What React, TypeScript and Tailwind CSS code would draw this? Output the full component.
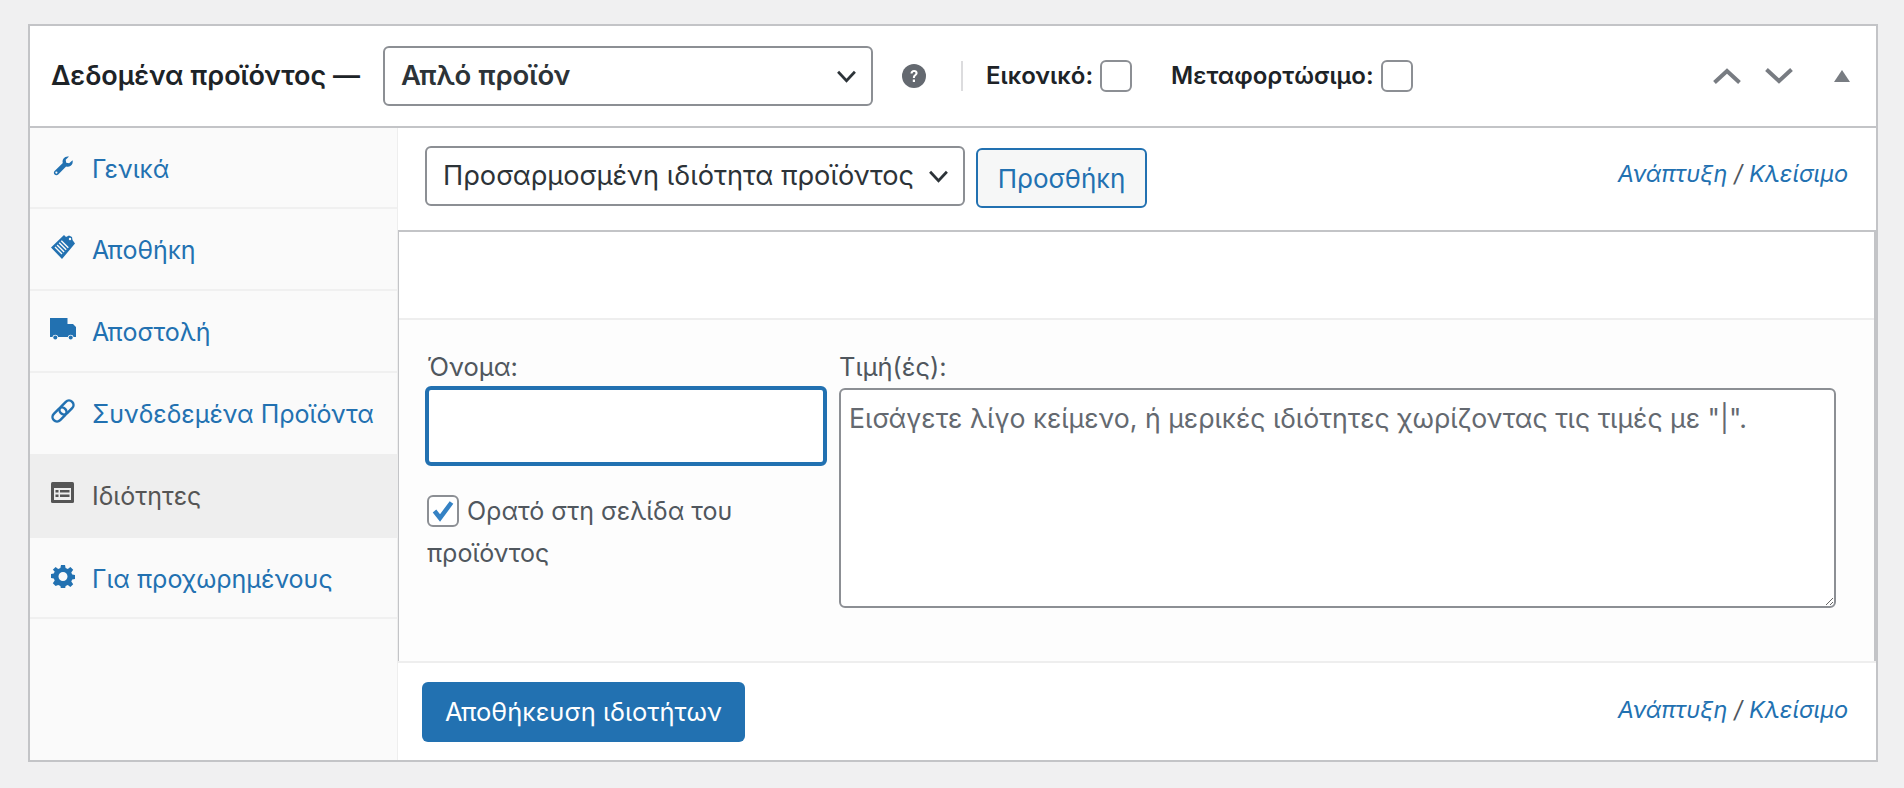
import React from 'react';

const Wrench = () => (
  <svg viewBox="0 0 22 22" className="w-[22px] h-[22px]" fill="currentColor">
    <path d="M20.600 5.200c.5 2.200-.2 4.300-1.900 5.500-1.400 1-3.100 1.200-4.600.7L6.200 19.600c-1 1-2.600 1-3.600 0s-1-2.500 0-3.500l8.200-8c-.5-1.600-.2-3.300.8-4.600C12.800 1.800 15 1.100 17 1.600l-3.300 3.200.5 2.900 2.900.6 3.500-3.100zM4.400 16.500a1.100 1.100 0 1 0 0 2.200 1.100 1.100 0 0 0 0-2.200z" />
  </svg>
);

const Clipboard = () => (
  <svg viewBox="0 0 26 26" className="w-[26px] h-[26px]">
    <path fill="currentColor" d="M1 13.500 14 1l2 2 3-1.500 3 1.500.5 3 2.500 3.500L12 25z" />
    <g stroke="#fafafa" strokeWidth="1.400">
      <path d="m5 13 7 7M7.100 10.900l7 7M9.200 8.800l7 7M11.300 6.700l7 7" />
    </g>
    <circle cx="20" cy="5" r="1.200" fill="#fafafa" />
  </svg>
);

const Truck = () => (
  <svg viewBox="0 0 26 22" className="w-[26px] h-[22px]" fill="currentColor">
    <path d="M0 0h17.500v6H23l3 3v10h-2.400a3 3 0 0 0-5.800 0H8.200a3 3 0 0 0-5.800 0H0z" />
    <circle cx="5.300" cy="19.500" r="2" />
    <circle cx="20.700" cy="19.500" r="2" />
  </svg>
);

const LinkIcon = () => (
  <svg viewBox="0 0 24 24" className="w-[24px] h-[24px]" fill="none" stroke="currentColor" strokeWidth="2.500">
    <rect x="-8" y="-4.500" width="16" height="9" rx="4.500" transform="translate(15.500 8.500) rotate(-45)" />
    <rect x="-8" y="-4.500" width="16" height="9" rx="4.500" transform="translate(8.500 15.500) rotate(-45)" />
  </svg>
);

const TableIcon = () => (
  <svg viewBox="0 0 24 22" className="w-[24px] h-[22px]">
    <rect x="0" y="0" width="23" height="21" rx="1.500" fill="currentColor" />
    <rect x="3" y="6" width="17" height="12" fill="#eeeeee" />
    <path d="M4.500 8h3v2.500h-3zM4.500 12.500h3V15h-3zM9 8h9.500v2.500H9zM9 12.500h9.500V15H9z" fill="currentColor" />
  </svg>
);

const Gear = () => (
  <svg viewBox="0 0 24 24" className="w-[24px] h-[24px]" fill="currentColor">
    <path fillRule="evenodd" d="M10 1h4l.6 3 2.200.9L19.400 3l2.800 2.800-1.900 2.600.9 2.100 2.800.5v4l-2.800.5-.9 2.100 1.900 2.600-2.800 2.800-2.600-1.900-2.200.9-.6 3h-4l-.6-3-2.200-.9L4.600 22l-2.800-2.800 1.900-2.600-.9-2.100L0 14v-4l2.800-.5.9-2.100L1.800 5.800 4.600 3l2.600 1.900 2.200-.9zM12 8a4.500 4.500 0 1 0 0 9 4.500 4.500 0 0 0 0-9z" />
  </svg>
);

const Chevron = () => (
  <svg viewBox="0 0 20 12" className="w-[21px] h-[13px]" fill="none" stroke="#2c3338" strokeWidth="2.600">
    <path d="M2 1.500 10 10l8-8.500" />
  </svg>
);

const tabs = [
  { label: 'Γενικά', icon: <Wrench />, cls: 'h-[81px] border-[#f0f0f0] text-[#2271b1]' },
  { label: 'Αποθήκη', icon: <Clipboard />, cls: 'h-[82px] border-[#f0f0f0] text-[#2271b1]' },
  { label: 'Αποστολή', icon: <Truck />, cls: 'h-[82px] border-[#f0f0f0] text-[#2271b1]' },
  { label: 'Συνδεδεμένα Προϊόντα', icon: <LinkIcon />, cls: 'h-[81px] border-transparent text-[#2271b1]' },
  { label: 'Ιδιότητες', icon: <TableIcon />, cls: 'h-[84px] bg-[#eeeeee] border-[#eeeeee] text-[#555555]' },
  { label: 'Για προχωρημένους', icon: <Gear />, cls: 'h-[81px] border-[#f0f0f0] text-[#2271b1]' },
];

const ExpandClose = () => (
  <p className="italic text-[#50575e] text-[23.5px] leading-[34px] whitespace-nowrap">
    <a className="text-[#2271b1]">Ανάπτυξη</a> / <a className="text-[#2271b1]">Κλείσιμο</a>
  </p>
);

const Checkbox = ({ checked }: { checked?: boolean }) => (
  <span className="flex items-center justify-center shrink-0 w-[32px] h-[32px] bg-white border-2 border-[#8c8f94] rounded-[6px]">
    {checked && (
      <svg viewBox="0 0 24 24" className="w-[24px] h-[24px]" fill="none" stroke="#3582c4" strokeWidth="4.500">
        <path d="m3.500 12 5.500 7L20.500 3.500" />
      </svg>
    )}
  </span>
);

export default function App() {
  return (
    <div className="min-h-screen bg-[#f0f0f1] pl-[28px] pt-[24px] font-['Inter',sans-serif] text-[#2c3338]">
      <div className="w-[1850px] h-[738px] border-2 border-[#c3c4c7] bg-white flex flex-col">
        {/* header */}
        <div className="h-[102px] shrink-0 border-b-2 border-[#c3c4c7] flex items-center pl-[21px] pr-[26px]">
          <h2 className="text-[27px] font-semibold text-[#1d2327] whitespace-nowrap">Δεδομένα προϊόντος —</h2>
          <div className="relative ml-[23px] w-[490px]">
            <select className="appearance-none w-full h-[60px] pl-[16px] bg-white border-2 border-[#8c8f94] rounded-[6px] text-[27.5px] font-semibold text-[#2c3338]">
              <option>Απλό προϊόν</option>
            </select>
            <span className="absolute right-[16px] top-[24px]"><Chevron /></span>
          </div>
          <svg viewBox="0 0 24 24" className="w-[24px] h-[24px] ml-[29px] shrink-0">
            <circle cx="12" cy="12" r="12" fill="#646970" />
            <path d="M8.500 9.500c0-2.200 1.500-3.500 3.600-3.500s3.500 1.200 3.500 3c0 2.600-2.700 2.600-2.700 5h-2c0-3.200 2.600-3.300 2.600-4.900 0-.7-.6-1.200-1.400-1.200-.9 0-1.500.6-1.500 1.600zM10.800 15.500h2.200v2.400h-2.200z" fill="#fff" />
          </svg>
          <span className="w-[2px] h-[30px] bg-[#dcdcde] ml-[35px]" />
          <label className="flex items-center ml-[23px] text-[24px] font-semibold text-[#1d2327]">
            Εικονικό:<span className="ml-[7px]"><Checkbox /></span>
          </label>
          <label className="flex items-center ml-[39px] text-[24px] font-semibold text-[#1d2327]">
            Μεταφορτώσιμο:<span className="ml-[7px]"><Checkbox /></span>
          </label>
          <div className="ml-auto flex items-center">
            <svg viewBox="0 0 28 16" className="w-[28px] h-[16px]" fill="none" stroke="#787c82" strokeWidth="4">
              <path d="M1.500 14.500 14 3l12.500 11.500" />
            </svg>
            <svg viewBox="0 0 28 16" className="w-[28px] h-[16px] ml-[24px]" fill="none" stroke="#787c82" strokeWidth="4">
              <path d="M1.500 1.500 14 13 26.500 1.500" />
            </svg>
            <svg viewBox="0 0 16 12" className="w-[16px] h-[12px] ml-[41px]" fill="#787c82">
              <path d="M8 0l8 12H0z" />
            </svg>
          </div>
        </div>

        <div className="flex flex-1 min-h-0">
          {/* tabs */}
          <ul className="w-[368px] shrink-0 bg-[#fafafa] border-r border-[#eeeeee]">
            {tabs.map((t) => (
              <li key={t.label} className={`${t.cls} flex items-center pl-[20px] pt-[4px] border-b-2`}>
                <span className="w-[26px] flex justify-center -mt-[8px]">{t.icon}</span>
                <span className="ml-[16px] text-[25px] whitespace-nowrap">{t.label}</span>
              </li>
            ))}
          </ul>

          {/* panel */}
          <div className="flex-1 min-w-0 flex flex-col">
            <div className="h-[104px] shrink-0 flex items-start pt-[18px] pl-[27px] pr-[28px] border-b-2 border-[#f0f0f0]">
              <div className="relative w-[540px]">
                <select className="appearance-none w-full h-[60px] pl-[16px] bg-white border-2 border-[#8c8f94] rounded-[6px] text-[27.2px] text-[#2c3338]">
                  <option>Προσαρμοσμένη ιδιότητα προϊόντος</option>
                </select>
                <span className="absolute right-[16px] top-[24px]"><Chevron /></span>
              </div>
              <button className="ml-[11px] mt-[2px] w-[171px] h-[60px] bg-[#f6f7f7] border-2 border-[#2271b1] rounded-[6px] text-[26px] text-[#2271b1]">
                Προσθήκη
              </button>
              <div className="ml-auto mt-[11px]"><ExpandClose /></div>
            </div>

            <div className="flex-1 min-h-0 flex flex-col border-t-2 border-l border-r-2 border-[#c3c4c7] -mt-[2px]">
              <div className="h-[88px] shrink-0 bg-white border-b-2 border-[#eeeeee]" />
              <div className="flex-1 min-h-0 bg-[#fdfdfd] flex pl-[26px] pt-[32px]">
                <div className="w-[402px] shrink-0">
                  <label className="block ml-[2px] text-[25.5px] leading-[30px] text-[#50575e] h-[34px]">Όνομα:</label>
                  <input className="block w-full h-[80px] bg-white border-4 border-[#2271b1] rounded-[6px]" />
                  <label className="block mt-[24px] ml-[2px] text-[25px] leading-[42px] text-[#50575e]">
                    <span className="inline-block align-middle mr-[8px] -mt-[4px]"><Checkbox checked /></span>
                    Ορατό στη σελίδα του προϊόντος
                  </label>
                </div>
                <div className="ml-[12px] flex-1 min-w-0 pr-[38px]">
                  <label className="block text-[25.5px] leading-[30px] text-[#50575e] h-[36px]">Τιμή(ές):</label>
                  <textarea
                    className="block w-full h-[220px] px-[8px] py-[13px] bg-white border-2 border-[#8c8f94] rounded-[6px] text-[26.7px] leading-[30px] placeholder:text-[#646970]"
                    placeholder={'Εισάγετε λίγο κείμενο, ή μερικές ιδιότητες χωρίζοντας τις τιμές με "|".'}
                  />
                </div>
              </div>
            </div>

            <div className="h-[99px] shrink-0 bg-white border-t-2 border-[#eeeeee] flex items-center pl-[24px] pr-[28px]">
              <button className="w-[323px] h-[60px] bg-[#2271b1] rounded-[6px] text-white text-[25.5px] mt-[1px]">
                Αποθήκευση ιδιοτήτων
              </button>
              <div className="ml-auto -mt-[4px]"><ExpandClose /></div>
            </div>
          </div>
        </div>
      </div>
    </div>
  );
}
